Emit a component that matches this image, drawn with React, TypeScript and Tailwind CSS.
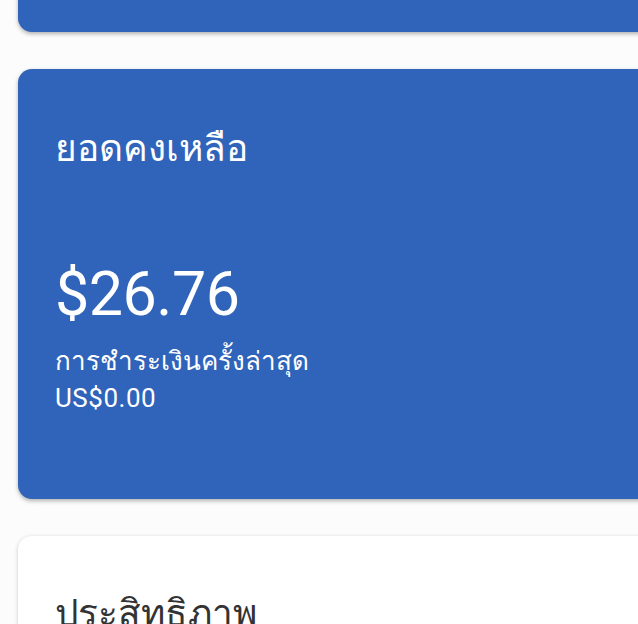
const font = { fontFamily: '"Roboto", "Noto Sans", "DejaVu Sans", sans-serif' };

const App = () => {
  return (
    <div className="w-[638px] h-[624px] overflow-hidden bg-[#fcfcfc]" style={font}>
      <div className="flex flex-col gap-[37px] pl-[18px] -mr-[20px] -mt-[60px]">
        <div className="h-[92px] rounded-[14px] bg-[#2f64ba] shadow-[0_2px_4px_rgba(0,0,0,0.3)]" />

        <div className="h-[430px] rounded-[14px] bg-[#2f64ba] shadow-[0_2px_4px_rgba(0,0,0,0.3)] pl-[37px] pt-[54px] text-white">
          <h2 className="text-[37px] leading-[52px]">ยอดคงเหลือ</h2>
          <p className="mt-[86px] text-[61px] leading-[66px] tracking-[-0.5px]">$26.76</p>
          <p className="mt-[16px] text-[26px] leading-[36px]">การชำระเงินครั้งล่าสุด</p>
          <p className="mt-[2px] text-[26px] leading-[34px] tracking-[0.5px]">US$0.00</p>
        </div>

        <div className="h-[200px] rounded-[14px] bg-white shadow-[0_1px_4px_rgba(0,0,0,0.2)] pl-[37px] pt-[52px]">
          <h2 className="text-[37px] leading-[52px] text-[#333]">ประสิทธิภาพ</h2>
        </div>
      </div>
    </div>
  );
};

export default App;
